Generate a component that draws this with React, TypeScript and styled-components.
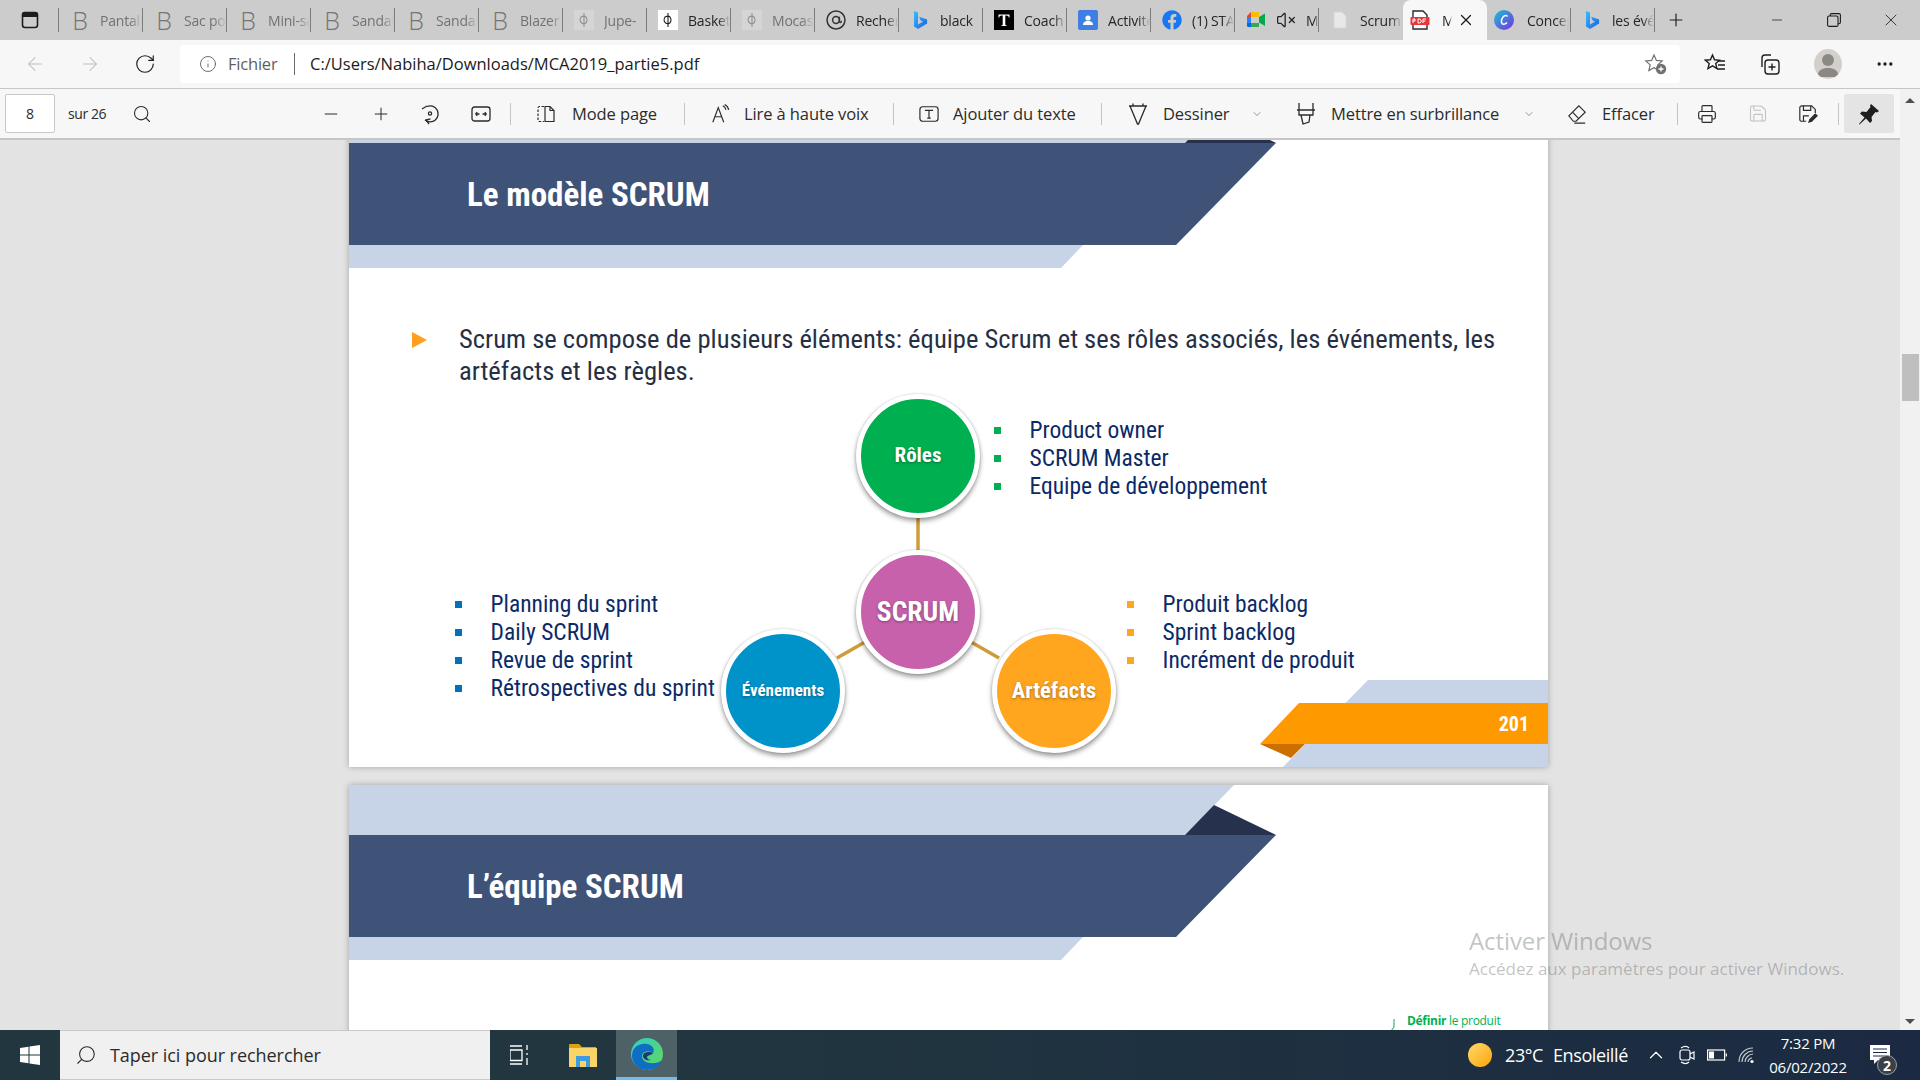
import React from "react";
import styled, { createGlobalStyle } from "styled-components";
import {
  ArrowLeft,
  ArrowRight,
  RotateCw,
  Info,
  Search,
  Minus,
  Plus,
  X,
  ChevronDown,
  ChevronUp,
  MoreHorizontal,
  VolumeX,
  Printer,
  Save,
} from "lucide-react";
import { FaFacebook } from "react-icons/fa";

const GlobalStyle = createGlobalStyle`
  html, body {
    margin: 0;
    padding: 0;
    height: 100%;
    overflow: hidden;
    background: #e3e3e3;
  }
  * { box-sizing: border-box; }
`;

const UI_FONT = `"Open Sans", "Noto Sans", sans-serif`;
const SLIDE_FONT = `Roboto, "Liberation Sans", sans-serif`;

const Screen = styled.div`
  width: 1920px;
  height: 1080px;
  display: flex;
  flex-direction: column;
  overflow: hidden;
  font-family: ${UI_FONT};
  position: relative;
`;

/* tab strip */
const TabStrip = styled.div`
  height: 40px;
  flex: none;
  background: #cccccc;
  display: flex;
  align-items: stretch;
`;
const SidebarButton = styled.div`
  width: 59px;
  display: flex;
  align-items: center;
  padding-left: 21px;
  position: relative;
  &::after {
    content: "";
    position: absolute;
    right: 0;
    top: 8px;
    bottom: 8px;
    width: 1px;
    background: #7d7d7d;
  }
`;
const Tab = styled.div<{ $noline?: boolean }>`
  width: 84px;
  flex: none;
  position: relative;
  display: flex;
  align-items: center;
  padding-left: 11px;
  &::after {
    content: "";
    display: ${(p) => (p.$noline ? "none" : "block")};
    position: absolute;
    right: 0;
    top: 8px;
    bottom: 8px;
    width: 1px;
    background: #7d7d7d;
  }
`;
const ActiveTab = styled.div`
  width: 84px;
  flex: none;
  height: 40px;
  background: #f7f7f7;
  border-radius: 8px 8px 0 0;
  display: flex;
  align-items: center;
  padding-left: 7px;
`;
const TabIcon = styled.div<{ $ml?: number }>`
  width: 20px;
  height: 20px;
  flex: none;
  margin-left: ${(p) => p.$ml ?? 0}px;
  display: flex;
  align-items: center;
  justify-content: center;
`;
const TabTitle = styled.span<{ $dim?: boolean; $w?: number; $ml?: number }>`
  font-size: 14px;
  letter-spacing: -0.2px;
  margin-left: ${(p) => p.$ml ?? 10}px;
  width: ${(p) => p.$w ?? 42}px;
  overflow: hidden;
  white-space: nowrap;
  color: ${(p) => (p.$dim ? "#727272" : "#262626")};
  mask-image: linear-gradient(to right, #000 72%, transparent 100%);
`;
const BingLetter = styled.span`
  font-family: "Open Sans", sans-serif;
  font-weight: 300;
  font-size: 25px;
  line-height: 20px;
  color: #757575;
`;
const NewTab = styled.div`
  width: 46px;
  display: flex;
  justify-content: center;
  align-items: center;
  margin-left: -2px;
`;
const WindowButtons = styled.div`
  margin-left: auto;
  padding-right: 1px;
  display: flex;
  align-items: center;
`;
const WindowButton = styled.div`
  width: 57px;
  display: flex;
  justify-content: center;
  align-items: center;
`;

/* address bar */
const AddressBar = styled.div`
  height: 49px;
  flex: none;
  background: #f7f7f7;
  border-bottom: 1px solid #c6c6c6;
  display: flex;
  align-items: center;
  padding-bottom: 1px;
`;
const NavButton = styled.div<{ $w: number; $ml?: number }>`
  width: ${(p) => p.$w}px;
  margin-left: ${(p) => p.$ml ?? 0}px;
  display: flex;
  justify-content: center;
  align-items: center;
`;
const UrlBox = styled.div`
  width: 1500px;
  height: 38px;
  background: #fff;
  border-radius: 4px;
  display: flex;
  align-items: center;
  padding-left: 19px;
  font-size: 16.5px;
`;
const SchemeLabel = styled.span`
  margin-left: 11px;
  color: #5f5f5f;
  width: 67px;
  border-right: 1px solid #6b6b6b;
  height: 22px;
  line-height: 22px;
  letter-spacing: -0.2px;
`;
const UrlText = styled.span`
  margin-left: 15px;
  color: #1b1b1b;
`;
const UrlEnd = styled.div`
  margin-left: auto;
  margin-right: 12px;
  display: flex;
`;
const BarActions = styled.div`
  display: flex;
  align-items: center;
  flex: 1;
`;
const Avatar = styled.div`
  width: 28px;
  height: 30px;
  border-radius: 50%;
  background: #d3d0cb;
  overflow: hidden;
`;

/* pdf toolbar + viewer */
const Body = styled.div`
  flex: 1;
  min-height: 0;
  display: flex;
`;
const DocColumn = styled.div`
  width: 1900px;
  display: flex;
  flex-direction: column;
  min-height: 0;
`;
const PdfToolbar = styled.div`
  height: 51px;
  flex: none;
  background: #f7f7f7;
  border-bottom: 2px solid #c6c6c6;
  display: flex;
  align-items: center;
  padding-left: 5px;
  font-size: 16.5px;
  color: #2b2b2b;
  letter-spacing: -0.1px;
`;
const PageBox = styled.div`
  width: 50px;
  height: 39px;
  background: #fff;
  border: 1px solid #c8c8c8;
  border-radius: 2px;
  display: flex;
  align-items: center;
  justify-content: center;
  font-size: 14px;
`;
const PageCount = styled.span`
  margin-left: 13px;
  width: 40px;
  font-size: 14px;
  white-space: nowrap;
  letter-spacing: -0.4px;
`;
const ToolIcon = styled.div<{ $ml: number; $w?: number }>`
  margin-left: ${(p) => p.$ml}px;
  width: ${(p) => p.$w ?? 20}px;
  height: 24px;
  flex: none;
  display: flex;
  align-items: center;
  justify-content: center;
`;
const ToolLabel = styled.span<{ $ml?: number; $w: number }>`
  margin-left: ${(p) => p.$ml ?? 15}px;
  width: ${(p) => p.$w}px;
  flex: none;
  white-space: nowrap;
`;
const ToolDivider = styled.div<{ $ml: number }>`
  margin-left: ${(p) => p.$ml}px;
  width: 1px;
  height: 22px;
  background: #c4c4c4;
  flex: none;
`;
const PinTile = styled.div`
  margin-left: 5px;
  width: 50px;
  height: 39px;
  border-radius: 2px;
  background: #e4e4e4;
  display: flex;
  align-items: center;
  justify-content: center;
`;
const Viewer = styled.div`
  flex: 1;
  min-height: 0;
  overflow: hidden;
  background: #e3e3e3;
  padding-left: 349px;
`;
const Slide = styled.section<{ $first?: boolean }>`
  width: 1199px;
  height: 674px;
  position: relative;
  background: #fff;
  box-shadow: 0 0 6px rgba(0, 0, 0, 0.28);
  margin-top: ${(p) => (p.$first ? "-47px" : "18px")};
  font-family: ${SLIDE_FONT};
  font-stretch: 75%;
`;
const SlideArt = styled.svg`
  position: absolute;
  inset: 0;
`;
const SlideHeader = styled.header`
  position: relative;
  height: 152px;
  padding: 50px 0 0 118px;
  display: flex;
  align-items: center;
`;
const SlideTitle = styled.h1`
  margin: 0;
  font-size: 33px;
  font-weight: 700;
  color: #fff;
  white-space: nowrap;
`;
const Lead = styled.div`
  position: relative;
  margin-top: 78px;
  padding-left: 63px;
  display: flex;
  gap: 32px;
  color: #262f44;
  font-size: 26.6px;
  line-height: 32px;
`;
const LeadArrow = styled.div`
  flex: none;
  width: 0;
  height: 0;
  margin-top: 9px;
  border-left: 15px solid #ff9f1c;
  border-top: 8px solid transparent;
  border-bottom: 8px solid transparent;
`;
const LeadText = styled.p`
  margin: 0;
  width: 1060px;
`;
const Diagram = styled.div`
  position: relative;
  height: 380px;
`;
const Links = styled.svg`
  position: absolute;
  inset: 0;
`;
const Node = styled.div<{ $x: number; $y: number; $color: string; $size: number }>`
  position: absolute;
  left: ${(p) => p.$x - 62}px;
  top: ${(p) => p.$y - 62}px;
  width: 124px;
  height: 124px;
  padding-bottom: 2px;
  border-radius: 50%;
  background: ${(p) => p.$color};
  border: 5px solid #fff;
  box-shadow: 0 3px 5px rgba(0, 0, 0, 0.4), 0 0 2px rgba(0, 0, 0, 0.2);
  display: flex;
  align-items: center;
  justify-content: center;
  color: #fff;
  font-weight: 700;
  font-size: ${(p) => p.$size}px;
  white-space: nowrap;
  text-shadow: 0 1px 3px rgba(0, 0, 0, 0.35);
`;
const ItemList = styled.ul<{ $x: number; $y: number; $bullet: string }>`
  position: absolute;
  left: ${(p) => p.$x}px;
  top: ${(p) => p.$y}px;
  margin: 0;
  padding: 0;
  list-style: none;
  color: #0b2a66;
  font-size: 23.5px;
  line-height: 28px;
  white-space: nowrap;
  li {
    height: 28px;
    display: flex;
    align-items: center;
  }
  li::before {
    content: "";
    width: 7px;
    height: 7px;
    flex: none;
    margin-right: 29px;
    background: ${(p) => p.$bullet};
  }
`;
const PageNumber = styled.div`
  position: absolute;
  right: 19px;
  bottom: 23px;
  height: 41px;
  display: flex;
  align-items: center;
  color: #fff;
  font-weight: 700;
  font-size: 20px;
`;
const FlowLabel = styled.div`
  position: absolute;
  left: 1058px;
  top: 227px;
  font-family: ${UI_FONT};
  font-stretch: normal;
  font-size: 12px;
  letter-spacing: -0.3px;
  color: #00b050;
  white-space: nowrap;
  b { font-weight: 700; }
`;
const FlowTick = styled.svg`
  position: absolute;
  left: 1041px;
  top: 234px;
`;

const ScrollTrack = styled.div`
  width: 20px;
  flex: none;
  background: #f1f1f1;
  display: flex;
  flex-direction: column;
  align-items: center;
  position: relative;
`;
const ScrollArrow = styled.div<{ $down?: boolean }>`
  position: absolute;
  ${(p) => (p.$down ? "bottom: 6px;" : "top: 9px;")}
  width: 0;
  height: 0;
  border-left: 5px solid transparent;
  border-right: 5px solid transparent;
  ${(p) =>
    p.$down ? "border-top: 5px solid #505050;" : "border-bottom: 5px solid #505050;"}
`;
const ScrollThumb = styled.div`
  position: absolute;
  top: 265px;
  width: 17px;
  height: 47px;
  background: #bfbfbf;
`;

const Watermark = styled.div`
  position: absolute;
  left: 1469px;
  top: 925px;
  color: rgba(110, 110, 110, 0.42);
  pointer-events: none;
`;
const WatermarkTitle = styled.div`
  font-size: 24px;
  line-height: 32px;
  letter-spacing: -0.1px;
`;
const WatermarkHint = styled.div`
  font-size: 17px;
  line-height: 24px;
`;

/* taskbar */
const Taskbar = styled.footer`
  height: 50px;
  flex: none;
  background: linear-gradient(to right, #21363f 0%, #21363f 35%, #1b2a42 100%);
  display: flex;
  align-items: center;
  color: #fff;
`;
const StartButton = styled.div`
  width: 60px;
  display: flex;
  justify-content: center;
`;
const SearchField = styled.div`
  width: 430px;
  height: 50px;
  background: #f0f0f0;
  border-top: 1px solid #c9c9c9;
  border-bottom: 1px solid #c9c9c9;
  display: flex;
  align-items: center;
  padding-left: 15px;
  color: #2b2b2b;
  font-size: 18px;
  letter-spacing: -0.05px;
`;
const SearchHint = styled.span`
  margin-left: 13px;
`;
const TaskSlot = styled.div<{ $w: number; $active?: boolean }>`
  width: ${(p) => p.$w}px;
  height: 50px;
  flex: none;
  display: flex;
  align-items: center;
  justify-content: center;
  background: ${(p) => (p.$active ? "#4d6167" : "transparent")};
  border-bottom: ${(p) => (p.$active ? "3px solid #76b9ed" : "none")};
`;
const Tray = styled.div`
  margin-left: auto;
  padding-right: 21px;
  display: flex;
  align-items: center;
  height: 50px;
  font-size: 18px;
  letter-spacing: -0.4px;
`;
const WeatherText = styled.span`
  margin-left: 13px;
  white-space: nowrap;
  width: 48px;
`;
const WeatherWord = styled.span`
  white-space: nowrap;
  width: 92px;
`;
const SunDot = styled.div`
  width: 24px;
  height: 24px;
  border-radius: 50%;
  background: linear-gradient(135deg, #ffd96a, #fca60a);
`;
const Clock = styled.div`
  width: 92px;
  text-align: center;
  font-size: 15px;
  line-height: 24px;
  letter-spacing: -0.2px;
`;
const NotifyBox = styled.div`
  width: 42px;
  margin-left: 3px;
  height: 50px;
  display: flex;
  align-items: center;
  position: relative;
  padding-left: 13px;
`;
const NotifyBadge = styled.div`
  position: absolute;
  left: 20px;
  top: 25px;
  width: 20px;
  height: 20px;
  border-radius: 50%;
  background: #3b3f47;
  border: 1px solid #9aa0a8;
  font-size: 14px;
  font-weight: 700;
  letter-spacing: 0;
  display: flex;
  align-items: center;
  justify-content: center;
`;

/* hand-drawn icons */
const SidebarIcon = () => (
  <svg width="18" height="18" viewBox="0 0 18 18">
    <rect x="1.5" y="1.5" width="15" height="15" rx="2.5" fill="none" stroke="#1c1c1c" strokeWidth="1.6" />
    <rect x="1.5" y="1.5" width="15" height="4.5" fill="#1c1c1c" />
  </svg>
);
const RestoreIcon = () => (
  <svg width="14" height="14" viewBox="0 0 14 14" fill="none" stroke="#1c1c1c" strokeWidth="1.1">
    <rect x="0.6" y="3" width="10.4" height="10.4" rx="1.5" />
    <path d="M3.2 3V2.100A1.500 1.500 0 0 1 4.700 0.600h7.200a1.500 1.500 0 0 1 1.500 1.500v7.200a1.500 1.500 0 0 1-1.500 1.500H11" />
  </svg>
);
const ShopGlyph = ({ dim }: { dim?: boolean }) => (
  <svg width="20" height="20" viewBox="0 0 20 20" opacity={dim ? 0.35 : 1}>
    <rect width="20" height="20" fill={dim ? "#e6e6e6" : "#fff"} />
    <path d="M10 3v14M7 7c-2 3-1 6 3 7 3-1 4-4 2-7-1-1-3-1-5 0z" fill="none" stroke="#222" strokeWidth="1.1" />
  </svg>
);
const AtGlyph = () => (
  <svg width="20" height="20" viewBox="0 0 20 20">
    <circle cx="10" cy="10" r="9" fill="none" stroke="#333" strokeWidth="1.5" />
    <circle cx="10" cy="10" r="3.4" fill="none" stroke="#333" strokeWidth="1.5" />
    <path d="M13.4 6.8v4.6c0 1.6 2 1.6 2-.6" fill="none" stroke="#333" strokeWidth="1.4" />
  </svg>
);
const BingGlyph = ({ id }: { id: string }) => (
  <svg width="16" height="20" viewBox="0 0 16 20">
    <defs>
      <linearGradient id={id} x1="0" y1="0" x2="1" y2="1">
        <stop offset="0" stopColor="#37bdff" />
        <stop offset="1" stopColor="#1b62e0" />
      </linearGradient>
    </defs>
    <path d="M2 1l4 1.4v12l5-2.8-2.4-1.2-1.5-3.6 8 2.8v4L6 19l-4-2.4z" fill={`url(#${id})`} />
  </svg>
);
const SerifTile = () => (
  <svg width="20" height="20" viewBox="0 0 20 20">
    <rect width="20" height="20" fill="#000" />
    <path d="M4.5 4.5h11v3h-.8c-.2-1.2-.8-1.9-2.4-1.9h-1v9c0 .6.4.8 1.4.8v.6H7.3v-.6c1 0 1.4-.2 1.4-.8v-9h-1c-1.6 0-2.2.7-2.4 1.9h-.8z" fill="#fff" />
  </svg>
);
const ClassroomTile = () => (
  <svg width="20" height="20" viewBox="0 0 20 20">
    <rect width="20" height="20" rx="2" fill="#3f7fe4" />
    <circle cx="10" cy="8" r="2.6" fill="#fff" />
    <path d="M5 15c0-3 2-4 5-4s5 1 5 4z" fill="#fff" />
  </svg>
);
const MeetGlyph = () => (
  <svg width="20" height="20" viewBox="0 0 20 20">
    <path d="M1 6l4-4v6H1z" fill="#e94235" />
    <path d="M5 2h8v5H5z" fill="#fbbc04" />
    <path d="M1 8h4v5H1z" fill="#2684fc" />
    <path d="M1 13h4v4H2.5A1.5 1.5 0 0 1 1 15.5z" fill="#0066da" />
    <path d="M5 13h8v4H5z" fill="#34a853" />
    <path d="M13 7l6-3.500v12.500l-6-3.500z" fill="#00ac47" />
    <path d="M13 2v5H5v6h8v4" fill="none" />
  </svg>
);
const BlankDoc = () => (
  <svg width="16" height="20" viewBox="0 0 16 20">
    <path d="M2 2h8l4 4v12H2z" fill="#e8e8e8" stroke="#d6d6d6" />
  </svg>
);
const PdfGlyph = () => (
  <svg width="20" height="20" viewBox="0 0 20 20">
    <path d="M3 1h10l4 4v14H3z" fill="#fff" stroke="#2a2a2a" strokeWidth="1.4" />
    <rect x="0.5" y="7" width="19" height="8" rx="1" fill="#e8343a" />
    <path d="M3 9v4M3 9h2v2H3M8 9v4h1.2a2 2 0 0 0 0-4zM13 9v4M13 9h3M13 11h2.4" fill="none" stroke="#fff" strokeWidth="1" />
  </svg>
);
const CanvaGlyph = () => (
  <svg width="20" height="20" viewBox="0 0 20 20">
    <defs>
      <linearGradient id="canva" x1="0" y1="0" x2="1" y2="1">
        <stop offset="0" stopColor="#19c3d6" />
        <stop offset="1" stopColor="#7b2fe0" />
      </linearGradient>
    </defs>
    <circle cx="10" cy="10" r="10" fill="url(#canva)" />
    <path d="M13.5 6.5c-.5-1.5-2.5-1.5-4 0s-3 5-1.5 7c1.2 1.4 3.5.6 5-1" fill="none" stroke="#fff" strokeWidth="1.5" />
  </svg>
);
const FavoritesAdd = () => (
  <svg width="24" height="24" viewBox="0 0 24 24">
    <path d="M10 3l2.4 5.4 5.8.6-4.4 3.9 1.3 5.7L10 15.7 4.9 18.6l1.3-5.7L1.8 9l5.8-.6z" fill="none" stroke="#707070" strokeWidth="1.2" />
    <circle cx="17" cy="17" r="5.2" fill="#707070" />
    <path d="M17 14.5v5M14.5 17h5" stroke="#fff" strokeWidth="1.3" />
  </svg>
);
const FavoritesList = () => (
  <svg width="22" height="22" viewBox="0 0 22 22">
    <path d="M8.5 2l2 4.8 5 .4-3.8 3.3 1.2 5-4.4-2.7L4 15.5l1.2-5L1.4 7.2l5-.4z" fill="none" stroke="#1e1e1e" strokeWidth="1.4" />
    <path d="M14 8h7M14 12h7M13 16h8" stroke="#1e1e1e" strokeWidth="1.3" />
  </svg>
);
const Collections = () => (
  <svg width="22" height="22" viewBox="0 0 22 22" fill="none" stroke="#1e1e1e" strokeWidth="1.4">
    <rect x="6" y="7" width="14" height="14" rx="3" />
    <path d="M3 14V5c0-2 1-3 3-3h6M13 10.5v7M9.5 14h7" />
  </svg>
);
const ZoomRotate = () => (
  <svg width="20" height="22" viewBox="0 0 20 22" fill="none" stroke="#2b2b2b" strokeWidth="1.3">
    <path d="M7 3.5A8 8 0 1 1 5 17" />
    <path d="M2 6l5-3M9 21l-3-4 4.5-1.2" />
    <circle cx="10" cy="10.5" r="1.6" />
  </svg>
);
const FitWidth = () => (
  <svg width="20" height="18" viewBox="0 0 20 18" fill="none" stroke="#2b2b2b" strokeWidth="1.3">
    <rect x="1" y="2" width="18" height="14" rx="2.5" />
    <path d="M4.5 9h4M4.5 9l1.8-1.8M4.5 9l1.8 1.8M15.5 9h-4M15.5 9l-1.8-1.8M15.5 9l-1.8 1.8" />
  </svg>
);
const PageMode = () => (
  <svg width="20" height="20" viewBox="0 0 20 20" fill="none" stroke="#2b2b2b" strokeWidth="1.2">
    <path d="M8 2.5H3.5A1.5 1.5 0 0 0 2 4v12a1.5 1.5 0 0 0 1.5 1.5H8" strokeDasharray="2.5 1.5" />
    <path d="M9 2.5h5l4 4v11H9z" />
    <path d="M14 2.5v4h4" />
  </svg>
);
const ReadAloud = () => (
  <svg width="22" height="22" viewBox="0 0 22 22" fill="none" stroke="#2b2b2b" strokeWidth="1.3">
    <path d="M2 20L8 4l6 16M4.5 14h7" />
    <path d="M13 2c2 1 3 2.500 3.500 4.500M15 0.500c2.500 1.200 4 3.500 4.500 6" />
  </svg>
);
const TextBox = () => (
  <svg width="22" height="18" viewBox="0 0 22 18" fill="none" stroke="#2b2b2b" strokeWidth="1.3">
    <rect x="1" y="1" width="20" height="16" rx="3" />
    <path d="M6.500 5h9M11 5v8.500M9 13.500h4" />
  </svg>
);
const PenTool = () => (
  <svg width="20" height="24" viewBox="0 0 20 24" fill="none" stroke="#2b2b2b" strokeWidth="1.3">
    <path d="M1 4h18M2 4l7.500 18h1L18 4M5 1.500v2.500M15 1.500v2.500" />
  </svg>
);
const Highlighter = () => (
  <svg width="20" height="24" viewBox="0 0 20 24" fill="none" stroke="#2b2b2b" strokeWidth="1.3">
    <path d="M3 1v7M17 1v7M1 8h18M3 8v5h14V8M5 13l2 9 6-2 1-7" />
  </svg>
);
const Eraser = () => (
  <svg width="22" height="22" viewBox="0 0 22 22" fill="none" stroke="#2b2b2b" strokeWidth="1.3">
    <path d="M2 13L13 2l7 7-10 10H7z" />
    <path d="M6 9l7 7M8 21h12" />
  </svg>
);
const SaveAs = () => (
  <svg width="22" height="22" viewBox="0 0 22 22" fill="none" stroke="#2b2b2b" strokeWidth="1.3">
    <path d="M9 19H4a2 2 0 0 1-2-2V4a2 2 0 0 1 2-2h11l4 4v4" />
    <path d="M6 2v5h8V2M6 19v-6h6" />
    <path d="M12 20l1-3 6-6 2 2-6 6z" fill="#2b2b2b" />
  </svg>
);
const PinIcon = () => (
  <svg width="24" height="24" viewBox="0 0 24 24">
    <path d="M14 2l8 7-2 1.500-1.500-.5-4 5 .5 4-2 2-4-4.500-6.500 6-.5-.5 5.500-6.500L3 11.500l2-2 4.500.5 4-5-.5-1.500z" fill="#1e1e1e" />
  </svg>
);
const WindowsLogo = () => (
  <svg width="20" height="20" viewBox="0 0 20 20" fill="#fff">
    <path d="M0 3l8.500-1.300v7.700H0zM9.500 1.500L20 0v9.400H9.500zM0 10.500h8.500v7.800L0 17zM9.500 10.500H20V20L9.500 18.500z" />
  </svg>
);
const TaskView = () => (
  <svg width="20" height="22" viewBox="0 0 20 22" fill="none" stroke="#fff" strokeWidth="1.3">
    <path d="M0 2h12M0 20h12M0 16.500V6h12v10.500H0M17 1v5M17 9v2M17 14v7" />
  </svg>
);
const Explorer = () => (
  <svg width="30" height="24" viewBox="0 0 30 24">
    <path d="M1 2a1 1 0 0 1 1-1h9l3 3h14v2H1z" fill="#e0a10f" />
    <rect x="1" y="5" width="28" height="19" fill="#fbd468" />
    <path d="M8 13h14v11h-4v-6h-6v6H8z" fill="#3f9ae0" />
  </svg>
);
const EdgeLogo = () => (
  <svg width="32" height="32" viewBox="0 0 32 32">
    <defs>
      <linearGradient id="edgeA" x1="0" y1="0" x2="1" y2="1">
        <stop offset="0" stopColor="#2fd0c2" />
        <stop offset="1" stopColor="#64d85a" />
      </linearGradient>
    </defs>
    <circle cx="16" cy="16" r="16" fill="url(#edgeA)" />
    <path d="M1 18C1 8 10 5 16 6c6 1 8 6 6 9-3-2-9-3-11 2-1 5 4 9 13 8 2 0 5-1 7-3-2 6-8 10-15 10C8 32 1 26 1 18z" fill="#0f6ec4" />
    <path d="M12 17c2-4 7-3 10-2-1 2-5 2-6 4 0 2 2 3 4 3-4 1-9-1-8-5z" fill="#1e3a6e" />
  </svg>
);
const MeetTray = () => (
  <svg width="16" height="20" viewBox="0 0 16 20" fill="none" stroke="#fff" strokeWidth="1.2">
    <rect x="1" y="5" width="10" height="10" rx="2" />
    <path d="M11 9l4-2v7l-4-2M2 3c3-2 6-2 8 0M2 17c3 2 6 2 8 0" />
  </svg>
);
const BatteryTray = () => (
  <svg width="20" height="12" viewBox="0 0 20 12" fill="none" stroke="#fff" strokeWidth="1.2">
    <rect x="0.600" y="1" width="17" height="10" />
    <rect x="2" y="2.500" width="5" height="7" fill="#fff" stroke="none" />
    <path d="M19.300 4.500v3" />
  </svg>
);
const WifiTray = () => (
  <svg width="18" height="18" viewBox="0 0 18 18" fill="none" stroke="#fff" strokeWidth="1.1">
    <path d="M1 16C1 8 7 2 15 2M4 16c0-6 5-11 11-11M7 16c0-4 4-8 8-8M10 16c0-2 2-4 4-4" opacity="0.75" />
    <circle cx="14" cy="15.500" r="1.600" fill="#fff" stroke="none" />
  </svg>
);
const NotifyIcon = () => (
  <svg width="20" height="20" viewBox="0 0 20 20">
    <path d="M0 0h20v15H8l-4 4v-4H0z" fill="#fff" />
    <path d="M3 4h14M3 7.500h14M3 11h14" stroke="#1b2a42" strokeWidth="1" />
  </svg>
);

const BannerArt = () => (
  <SlideArt width="1199" height="674" viewBox="0 0 1199 674">
    <polygon points="0,0 885,0 836,50 0,50" fill="#c7d3e6" />
    <polygon points="0,152 734,152 712,175 0,175" fill="#c7d3e6" />
    <polygon points="836,50 927,50 865,20" fill="#26324d" />
    <polygon points="0,50 927,50 827,152 0,152" fill="#3f5277" />
  </SlideArt>
);

interface TabData {
  title: string;
  icon: React.ReactNode;
  dim?: boolean;
}

const tabs: TabData[] = [
  { title: "Pantalon", icon: <BingLetter>B</BingLetter>, dim: true },
  { title: "Sac porté", icon: <BingLetter>B</BingLetter>, dim: true },
  { title: "Mini-sac", icon: <BingLetter>B</BingLetter>, dim: true },
  { title: "Sandales", icon: <BingLetter>B</BingLetter>, dim: true },
  { title: "Sandales", icon: <BingLetter>B</BingLetter>, dim: true },
  { title: "Blazer", icon: <BingLetter>B</BingLetter>, dim: true },
  { title: "Jupe-", icon: <ShopGlyph dim />, dim: true },
  { title: "Baskets", icon: <ShopGlyph /> },
  { title: "Mocassins", icon: <ShopGlyph dim />, dim: true },
  { title: "Recherche", icon: <AtGlyph /> },
  { title: "black", icon: <BingGlyph id="bingA" /> },
  { title: "Coach", icon: <SerifTile /> },
  { title: "Activité", icon: <ClassroomTile /> },
  { title: "(1) STAR", icon: <FaFacebook size={20} color="#1877f2" /> },
];

export default function App() {
  return (
    <Screen>
      <GlobalStyle />
      <TabStrip>
        <SidebarButton>
          <SidebarIcon />
        </SidebarButton>
        {tabs.map((tab, i) => (
          <Tab key={i}>
            <TabIcon>{tab.icon}</TabIcon>
            <TabTitle $dim={tab.dim}>{tab.title}</TabTitle>
          </Tab>
        ))}
        <Tab>
          <TabIcon>
            <MeetGlyph />
          </TabIcon>
          <TabIcon $ml={10}>
            <VolumeX size={20} strokeWidth={1.5} color="#222" />
          </TabIcon>
          <TabTitle $w={12}>MCA</TabTitle>
        </Tab>
        <Tab $noline>
          <TabIcon>
            <BlankDoc />
          </TabIcon>
          <TabTitle>Scrum</TabTitle>
        </Tab>
        <ActiveTab>
          <TabIcon>
            <PdfGlyph />
          </TabIcon>
          <TabTitle $w={10} $ml={12}>
            MCA
          </TabTitle>
          <X size={18} strokeWidth={1.6} color="#1c1c1c" style={{ marginLeft: 5 }} />
        </ActiveTab>
        <Tab>
          <TabIcon $ml={-4}>
            <CanvaGlyph />
          </TabIcon>
          <TabTitle $ml={13}>Concept</TabTitle>
        </Tab>
        <Tab>
          <TabIcon>
            <BingGlyph id="bingB" />
          </TabIcon>
          <TabTitle>les événements</TabTitle>
        </Tab>
        <NewTab>
          <Plus size={20} strokeWidth={1.4} color="#1c1c1c" />
        </NewTab>
        <WindowButtons>
          <WindowButton>
            <Minus size={16} strokeWidth={1.1} color="#1c1c1c" />
          </WindowButton>
          <WindowButton>
            <RestoreIcon />
          </WindowButton>
          <WindowButton>
            <X size={20} strokeWidth={1} color="#1c1c1c" />
          </WindowButton>
        </WindowButtons>
      </TabStrip>

      <AddressBar>
        <NavButton $w={70}>
          <ArrowLeft size={22} strokeWidth={1.1} color="#bdbdbd" />
        </NavButton>
        <NavButton $w={40}>
          <ArrowRight size={22} strokeWidth={1.1} color="#bdbdbd" />
        </NavButton>
        <NavButton $w={70}>
          <RotateCw size={22} strokeWidth={1.3} color="#1e1e1e" />
        </NavButton>
        <UrlBox>
          <Info size={18} strokeWidth={1.2} color="#5f5f5f" />
          <SchemeLabel>Fichier</SchemeLabel>
          <UrlText>C:/Users/Nabiha/Downloads/MCA2019_partie5.pdf</UrlText>
          <UrlEnd>
            <FavoritesAdd />
          </UrlEnd>
        </UrlBox>
        <BarActions>
          <NavButton $w={70}>
            <FavoritesList />
          </NavButton>
          <NavButton $w={40}>
            <Collections />
          </NavButton>
          <NavButton $w={28} $ml={24}>
            <Avatar>
              <svg width="28" height="30" viewBox="0 0 28 30" fill="#8c8985">
                <circle cx="14" cy="11" r="6" />
                <path d="M3 28c1-7 5-9 11-9s10 2 11 9z" />
              </svg>
            </Avatar>
          </NavButton>
          <NavButton $w={36} $ml={25}>
            <MoreHorizontal size={20} strokeWidth={2} color="#1e1e1e" />
          </NavButton>
        </BarActions>
      </AddressBar>

      <Body>
        <DocColumn>
          <PdfToolbar>
            <PageBox>8</PageBox>
            <PageCount>sur 26</PageCount>
            <ToolIcon $ml={24}>
              <Search size={20} strokeWidth={1.3} color="#2b2b2b" />
            </ToolIcon>
            <ToolIcon $ml={169}>
              <Minus size={22} strokeWidth={1.2} color="#2b2b2b" />
            </ToolIcon>
            <ToolIcon $ml={30}>
              <Plus size={22} strokeWidth={1.2} color="#2b2b2b" />
            </ToolIcon>
            <ToolIcon $ml={29}>
              <ZoomRotate />
            </ToolIcon>
            <ToolIcon $ml={31}>
              <FitWidth />
            </ToolIcon>
            <ToolDivider $ml={19} />
            <ToolIcon $ml={25}>
              <PageMode />
            </ToolIcon>
            <ToolLabel $ml={16} $w={88}>
              Mode page
            </ToolLabel>
            <ToolDivider $ml={24} />
            <ToolIcon $ml={26}>
              <ReadAloud />
            </ToolIcon>
            <ToolLabel $ml={13} $w={126}>
              Lire à haute voix
            </ToolLabel>
            <ToolDivider $ml={23} />
            <ToolIcon $ml={25}>
              <TextBox />
            </ToolIcon>
            <ToolLabel $ml={14} $w={125}>
              Ajouter du texte
            </ToolLabel>
            <ToolDivider $ml={23} />
            <ToolIcon $ml={26}>
              <PenTool />
            </ToolIcon>
            <ToolLabel $w={65}>Dessiner</ToolLabel>
            <ToolIcon $ml={23} $w={12}>
              <ChevronDown size={14} strokeWidth={1.2} color="#555" />
            </ToolIcon>
            <ToolIcon $ml={33}>
              <Highlighter />
            </ToolIcon>
            <ToolLabel $w={168}>Mettre en surbrillance</ToolLabel>
            <ToolIcon $ml={24} $w={12}>
              <ChevronDown size={14} strokeWidth={1.2} color="#555" />
            </ToolIcon>
            <ToolIcon $ml={32}>
              <Eraser />
            </ToolIcon>
            <ToolLabel $w={52}>Effacer</ToolLabel>
            <ToolDivider $ml={23} />
            <ToolIcon $ml={19}>
              <Printer size={22} strokeWidth={1.4} color="#2b2b2b" />
            </ToolIcon>
            <ToolIcon $ml={31}>
              <Save size={21} strokeWidth={1.3} color="#c2c2c2" />
            </ToolIcon>
            <ToolIcon $ml={30}>
              <SaveAs />
            </ToolIcon>
            <ToolDivider $ml={20} />
            <PinTile>
              <PinIcon />
            </PinTile>
          </PdfToolbar>

          <Viewer>
            <Slide $first>
              <BannerArt />
              <SlideArt width="1199" height="674" viewBox="0 0 1199 674">
                <polygon points="1019,587 1199,587 1199,674 934,674" fill="#c7d3e6" />
                <polygon points="950,610 1199,610 1199,651 911,651" fill="#ff9900" />
                <polygon points="911,651 956,651 942,665" fill="#cc6f00" />
              </SlideArt>
              <SlideHeader>
                <SlideTitle>Le modèle SCRUM</SlideTitle>
              </SlideHeader>
              <Lead>
                <LeadArrow />
                <LeadText>
                  Scrum se compose de plusieurs éléments: équipe Scrum et ses rôles associés, les événements, les artéfacts et les règles.
                </LeadText>
              </Lead>
              <Diagram>
                <Links width="1199" height="380" viewBox="0 0 1199 380" stroke="#cf9c3a" strokeWidth="3.5">
                  <line x1="569" y1="131" x2="569" y2="165" />
                  <line x1="488" y1="271" x2="516" y2="255" />
                  <line x1="622" y1="255" x2="650" y2="271" />
                </Links>
                <Node $x={569} $y={69} $color="#00b050" $size={21}>
                  Rôles
                </Node>
                <Node $x={569} $y={225} $color="#c861ac" $size={27.5}>
                  SCRUM
                </Node>
                <Node $x={434} $y={304} $color="#0093c9" $size={17}>
                  Événements
                </Node>
                <Node $x={705} $y={304} $color="#ffa51e" $size={22.5}>
                  Artéfacts
                </Node>
                <ItemList $x={644.5} $y={29} $bullet="#00b050">
                  <li>Product owner</li>
                  <li>SCRUM Master</li>
                  <li>Equipe de développement</li>
                </ItemList>
                <ItemList $x={105.5} $y={203} $bullet="#0070c0">
                  <li>Planning du sprint</li>
                  <li>Daily SCRUM</li>
                  <li>Revue de sprint</li>
                  <li>Rétrospectives du sprint</li>
                </ItemList>
                <ItemList $x={777.5} $y={203} $bullet="#ffa51e">
                  <li>Produit backlog</li>
                  <li>Sprint backlog</li>
                  <li>Incrément de produit</li>
                </ItemList>
              </Diagram>
              <PageNumber>201</PageNumber>
            </Slide>

            <Slide>
              <BannerArt />
              <SlideHeader>
                <SlideTitle>L’équipe SCRUM</SlideTitle>
              </SlideHeader>
              <FlowTick width="12" height="14" viewBox="0 0 12 14" fill="none" stroke="#00b050">
                <path d="M4 0v8L1 12" />
              </FlowTick>
              <FlowLabel>
                <b>Définir</b> le produit
              </FlowLabel>
            </Slide>
          </Viewer>
        </DocColumn>
        <ScrollTrack>
          <ScrollArrow />
          <ScrollThumb />
          <ScrollArrow $down />
        </ScrollTrack>
      </Body>

      <Watermark>
        <WatermarkTitle>Activer Windows</WatermarkTitle>
        <WatermarkHint>Accédez aux paramètres pour activer Windows.</WatermarkHint>
      </Watermark>

      <Taskbar>
        <StartButton>
          <WindowsLogo />
        </StartButton>
        <SearchField>
          <Search size={22} strokeWidth={1.2} color="#2b2b2b" style={{ transform: "scaleX(-1)" }} />
          <SearchHint>Taper ici pour rechercher</SearchHint>
        </SearchField>
        <TaskSlot $w={60}>
          <TaskView />
        </TaskSlot>
        <TaskSlot $w={66}>
          <Explorer />
        </TaskSlot>
        <TaskSlot $w={61} $active>
          <EdgeLogo />
        </TaskSlot>
        <Tray>
          <SunDot />
          <WeatherText>23°C</WeatherText>
          <WeatherWord>Ensoleillé</WeatherWord>
          <ChevronUp size={22} strokeWidth={1.3} color="#fff" />
          <NavButton $w={30} $ml={5}>
            <MeetTray />
          </NavButton>
          <NavButton $w={30}>
            <BatteryTray />
          </NavButton>
          <NavButton $w={30}>
            <WifiTray />
          </NavButton>
          <Clock>
            7:32 PM
            <br />
            06/02/2022
          </Clock>
          <NotifyBox>
            <NotifyIcon />
            <NotifyBadge>2</NotifyBadge>
          </NotifyBox>
        </Tray>
      </Taskbar>
    </Screen>
  );
}
